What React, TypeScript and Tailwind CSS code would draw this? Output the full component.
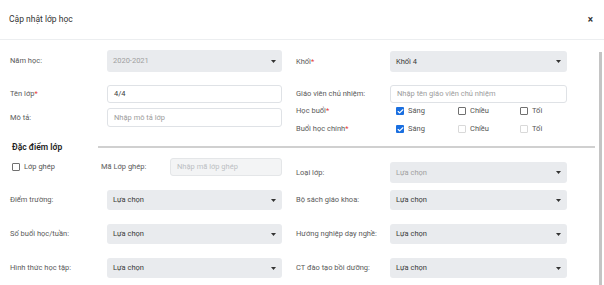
import { Check } from "lucide-react";

function Caret() {
  return (
    <svg width="5" height="3" viewBox="0 0 5 3" className="shrink-0">
      <path d="M0 0h5L2.5 3z" fill="#333" />
    </svg>
  );
}

function Select({
  value,
  disabled,
  className = "",
}: {
  value: string;
  disabled?: boolean;
  className?: string;
}) {
  return (
    <div
      className={`flex items-center justify-between rounded-[3px] bg-[#e9ebee] pl-[6px] pr-[6px] ${className}`}
    >
      <span className={disabled ? "text-[#a0a0a0]" : "text-[#3a3a3a]"}>{value}</span>
      <Caret />
    </div>
  );
}

function Input({
  value,
  placeholder,
  disabled,
  className = "",
}: {
  value?: string;
  placeholder?: string;
  disabled?: boolean;
  className?: string;
}) {
  return (
    <div
      className={`flex items-center rounded-[3px] border pl-[6px] ${
        disabled ? "border-[#e4e6e8] bg-[#f3f4f5]" : "border-[#dfe2e6] bg-white"
      } ${className}`}
    >
      {value ? (
        <span className="text-[#3a3a3a]">{value}</span>
      ) : (
        <span className={disabled ? "text-[#bcbfc3]" : "text-[#9c9c9c]"}>{placeholder}</span>
      )}
    </div>
  );
}

function Box({ checked, disabled }: { checked?: boolean; disabled?: boolean }) {
  if (checked) {
    return (
      <span className="flex h-[8px] w-[8px] shrink-0 items-center justify-center rounded-[1px] bg-[#1a6fe0]">
        <Check size={7} strokeWidth={4} color="white" />
      </span>
    );
  }
  return (
    <span
      className={`h-[8px] w-[8px] shrink-0 rounded-[1px] border ${
        disabled ? "border-[#d9d9d9]" : "border-[#707070]"
      }`}
    />
  );
}

function Opt({ label, checked, disabled, w }: { label: string; checked?: boolean; disabled?: boolean; w: string }) {
  return (
    <div className={`flex items-center gap-[4px] ${w}`}>
      <Box checked={checked} disabled={disabled} />
      <span className="text-[#555]">{label}</span>
    </div>
  );
}

function Req() {
  return <span className="text-[#e53935]">*</span>;
}

const lbl = "shrink-0 text-[#5a5a5a]";

export default function App() {
  return (
    <div className="h-[285px] w-[604px] overflow-hidden bg-white font-['Roboto',sans-serif] text-[7.5px]">
      <div className="flex h-[40px] items-center justify-between border-b border-[#eceef0] pl-[9px] pr-[11px]">
        <span className="text-[8.5px] text-[#333]">Cập nhật lớp học</span>
        <span className="text-[10px] font-bold leading-none text-[#333]">×</span>
      </div>

      <div className="flex">
        <div className="w-[599px]">
          <div className="flex px-[10px] pt-[10px]">
            <div className="w-[272px]">
              <div className="flex h-[22px] items-center">
                <span className={`${lbl} w-[97px]`}>Năm học:</span>
                <Select value="2020-2021" disabled className="h-[22px] w-[175px]" />
              </div>
              <div className="mt-[13px] flex h-[18px] items-center">
                <span className={`${lbl} w-[97px]`}>
                  Tên lớp<Req />
                </span>
                <Input value="4/4" className="h-[18px] w-[175px]" />
              </div>
              <div className="mt-[5px] flex h-[19px] items-center">
                <span className={`${lbl} w-[97px]`}>Mô tả:</span>
                <Input placeholder="Nhập mô tả lớp" className="h-[19px] w-[175px]" />
              </div>
            </div>

            <div className="ml-[14px] w-[271px]">
              <div className="mt-[1px] flex h-[21px] items-center">
                <span className={`${lbl} w-[94px]`}>
                  Khối<Req />
                </span>
                <Select value="Khối 4" className="h-[21px] w-[177px]" />
              </div>
              <div className="mt-[13px] flex h-[18px] items-center">
                <span className={`${lbl} w-[94px]`}>Giáo viên chủ nhiệm:</span>
                <Input placeholder="Nhập tên giáo viên chủ nhiệm" className="h-[18px] w-[177px]" />
              </div>
              <div className="mt-[1px] flex h-[14px] items-center">
                <span className={`${lbl} w-[100px]`}>
                  Học buổi<Req />
                </span>
                <Opt label="Sáng" checked w="w-[62px]" />
                <Opt label="Chiều" w="w-[62px]" />
                <Opt label="Tối" w="w-[40px]" />
              </div>
              <div className="mt-[4px] flex h-[14px] items-center">
                <span className={`${lbl} w-[100px]`}>
                  Buổi học chính<Req />
                </span>
                <Opt label="Sáng" checked w="w-[62px]" />
                <Opt label="Chiều" disabled w="w-[62px]" />
                <Opt label="Tối" disabled w="w-[40px]" />
              </div>
            </div>
          </div>

          <div className="mt-[4px] flex h-[14px] items-center pl-[12px] pr-[4px]">
            <span className="w-[86px] shrink-0 text-[8.5px] font-semibold text-[#222]">Đặc điểm lớp</span>
            <div className="h-[2px] flex-1 bg-[#d0d0d0]" />
          </div>

          <div className="px-[10px]">
            <div className="flex h-[26px] items-start">
              <div className="flex h-[26px] w-[91px] items-center gap-[4px] pl-[2px]">
                <Box />
                <span className="text-[#555]">Lớp ghép</span>
              </div>
              <div className="flex h-[26px] items-center">
                <span className={`${lbl} w-[69px]`}>Mã Lớp ghép:</span>
                <Input placeholder="Nhập mã lớp ghép" disabled className="h-[18px] w-[112px]" />
              </div>
              <div className="ml-[14px] mt-[8px] flex h-[21px] items-center">
                <span className={`${lbl} w-[94px]`}>Loại lớp:</span>
                <Select value="Lựa chọn" disabled className="h-[21px] w-[177px]" />
              </div>
            </div>

            {[
              ["Điểm trường:", "Bộ sách giáo khoa:", "mt-[3px]"],
              ["Số buổi học/tuần:", "Hướng nghiệp dạy nghề:", ""],
              ["Hình thức học tập:", "CT đào tạo bồi dưỡng:", ""],
            ].map(([l, r, m]) => (
              <div key={l} className={`flex h-[34px] items-center ${m}`}>
                <span className={`${lbl} w-[97px]`}>{l}</span>
                <Select value="Lựa chọn" className="h-[20px] w-[175px]" />
                <span className={`${lbl} ml-[14px] w-[94px]`}>{r}</span>
                <Select value="Lựa chọn" className="h-[20px] w-[177px]" />
              </div>
            ))}
          </div>
        </div>
        <div className="mt-[12px] h-[240px] w-[3px] bg-[#c4c4c4]" />
      </div>
    </div>
  );
}
